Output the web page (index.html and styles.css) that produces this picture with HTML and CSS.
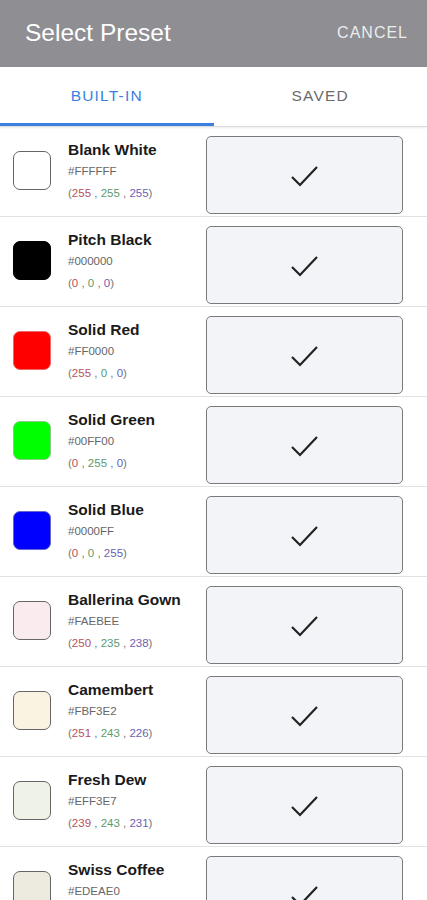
FILE: index.html
```html
<!DOCTYPE html>
<html lang="en">
<head>
    <meta charset="UTF-8">
    <meta name="viewport" content="width=device-width, initial-scale=1.0">
    <title>Select Preset</title>
    <link rel="stylesheet" href="styles.css">
</head>
<body>
    <div class="header">
        <div class="title">Select Preset</div>
        <div class="cancel">CANCEL</div>
    </div>

    <div class="tabs">
        <div class="tab active">BUILT-IN</div>
        <div class="tab">SAVED</div>
    </div>

    <div class="list">
        <div class="row">
            <div class="swatch" style="background:#FFFFFF"></div>
            <div class="info">
                <div class="name">Blank White</div>
                <div class="hex">#FFFFFF</div>
                <div class="rgb">(<span class="r">255</span> , <span class="g">255</span> , <span class="b">255</span>)</div>
            </div>
            <button class="pick"><svg viewBox="0 0 30 24" width="30" height="24"><path d="M2 13 L10 21 L27 3" fill="none" stroke="#222" stroke-width="2.2"/></svg></button>
        </div>
        <div class="row">
            <div class="swatch" style="background:#000000;border-color:#000"></div>
            <div class="info">
                <div class="name">Pitch Black</div>
                <div class="hex">#000000</div>
                <div class="rgb">(<span class="r">0</span> , <span class="g">0</span> , <span class="b">0</span>)</div>
            </div>
            <button class="pick"><svg viewBox="0 0 30 24" width="30" height="24"><path d="M2 13 L10 21 L27 3" fill="none" stroke="#222" stroke-width="2.2"/></svg></button>
        </div>
        <div class="row">
            <div class="swatch" style="background:#FF0000;border-color:#e66"></div>
            <div class="info">
                <div class="name">Solid Red</div>
                <div class="hex">#FF0000</div>
                <div class="rgb">(<span class="r">255</span> , <span class="g">0</span> , <span class="b">0</span>)</div>
            </div>
            <button class="pick"><svg viewBox="0 0 30 24" width="30" height="24"><path d="M2 13 L10 21 L27 3" fill="none" stroke="#222" stroke-width="2.2"/></svg></button>
        </div>
        <div class="row">
            <div class="swatch" style="background:#00FF00;border-color:#8c8"></div>
            <div class="info">
                <div class="name">Solid Green</div>
                <div class="hex">#00FF00</div>
                <div class="rgb">(<span class="r">0</span> , <span class="g">255</span> , <span class="b">0</span>)</div>
            </div>
            <button class="pick"><svg viewBox="0 0 30 24" width="30" height="24"><path d="M2 13 L10 21 L27 3" fill="none" stroke="#222" stroke-width="2.2"/></svg></button>
        </div>
        <div class="row">
            <div class="swatch" style="background:#0000FF;border-color:#66c"></div>
            <div class="info">
                <div class="name">Solid Blue</div>
                <div class="hex">#0000FF</div>
                <div class="rgb">(<span class="r">0</span> , <span class="g">0</span> , <span class="b">255</span>)</div>
            </div>
            <button class="pick"><svg viewBox="0 0 30 24" width="30" height="24"><path d="M2 13 L10 21 L27 3" fill="none" stroke="#222" stroke-width="2.2"/></svg></button>
        </div>
        <div class="row">
            <div class="swatch" style="background:#FAEBEE"></div>
            <div class="info">
                <div class="name">Ballerina Gown</div>
                <div class="hex">#FAEBEE</div>
                <div class="rgb">(<span class="r">250</span> , <span class="g">235</span> , <span class="b">238</span>)</div>
            </div>
            <button class="pick"><svg viewBox="0 0 30 24" width="30" height="24"><path d="M2 13 L10 21 L27 3" fill="none" stroke="#222" stroke-width="2.2"/></svg></button>
        </div>
        <div class="row">
            <div class="swatch" style="background:#FBF3E2"></div>
            <div class="info">
                <div class="name">Camembert</div>
                <div class="hex">#FBF3E2</div>
                <div class="rgb">(<span class="r">251</span> , <span class="g">243</span> , <span class="b">226</span>)</div>
            </div>
            <button class="pick"><svg viewBox="0 0 30 24" width="30" height="24"><path d="M2 13 L10 21 L27 3" fill="none" stroke="#222" stroke-width="2.2"/></svg></button>
        </div>
        <div class="row">
            <div class="swatch" style="background:#EFF3E7"></div>
            <div class="info">
                <div class="name">Fresh Dew</div>
                <div class="hex">#EFF3E7</div>
                <div class="rgb">(<span class="r">239</span> , <span class="g">243</span> , <span class="b">231</span>)</div>
            </div>
            <button class="pick"><svg viewBox="0 0 30 24" width="30" height="24"><path d="M2 13 L10 21 L27 3" fill="none" stroke="#222" stroke-width="2.2"/></svg></button>
        </div>
        <div class="row">
            <div class="swatch" style="background:#EDEAE0"></div>
            <div class="info">
                <div class="name">Swiss Coffee</div>
                <div class="hex">#EDEAE0</div>
                <div class="rgb">(<span class="r">237</span> , <span class="g">234</span> , <span class="b">224</span>)</div>
            </div>
            <button class="pick"><svg viewBox="0 0 30 24" width="30" height="24"><path d="M2 13 L10 21 L27 3" fill="none" stroke="#222" stroke-width="2.2"/></svg></button>
        </div>
    </div>
</body>
</html>
```

FILE: styles.css
```css
* {
    margin: 0;
    padding: 0;
    box-sizing: border-box;
}

body {
    font-family: 'Liberation Sans', Arial, sans-serif;
    background: #ffffff;
    width: 427px;
    height: 900px;
    overflow: hidden;
}

.header {
    height: 67px;
    background: #8e8e93;
    display: flex;
    align-items: center;
    justify-content: space-between;
    padding: 0 19px 0 25px;
}

.title {
    color: #ffffff;
    font-size: 24.5px;
    padding-bottom: 2px;
}

.cancel {
    color: #ececee;
    font-size: 16px;
    letter-spacing: 1px;
    padding-bottom: 2px;
}

.tabs {
    display: flex;
    height: 60px;
    border-bottom: 1px solid #dcdcdc;
    box-shadow: 0 1px 2px rgba(0, 0, 0, 0.08);
}

.tab {
    flex: 1;
    display: flex;
    align-items: center;
    justify-content: center;
    font-size: 15.5px;
    letter-spacing: 1.2px;
    color: #6a6a6a;
    border-bottom: 3px solid transparent;
    padding-top: 2px;
}

.tab.active {
    color: #3b7fe0;
    border-bottom-color: #3b7fe0;
}

.row {
    height: 90px;
    display: flex;
    align-items: flex-start;
    border-bottom: 1px solid #e2e2e2;
    padding: 9px 24px 0 13px;
}

.swatch {
    width: 38px;
    height: 39px;
    border: 1.5px solid #666;
    border-radius: 7px;
    margin-top: 15px;
    flex-shrink: 0;
}

.info {
    flex: 1;
    padding-left: 17px;
    padding-top: 5px;
}

.name {
    font-size: 15.5px;
    font-weight: bold;
    color: #1a1a1a;
    line-height: 18px;
}

.hex {
    font-size: 11.5px;
    color: #666;
    margin-top: 5px;
    line-height: 14px;
}

.rgb {
    font-size: 11.5px;
    color: #777;
    margin-top: 8px;
    line-height: 14px;
}

.rgb .r { color: #b8505c; }
.rgb .g { color: #5c9a6e; }
.rgb .b { color: #6a62b4; }

.pick {
    width: 197px;
    height: 78px;
    flex-shrink: 0;
    background: #f3f4f8;
    border: 1.5px solid #7a7a7a;
    border-radius: 5px;
    display: flex;
    align-items: center;
    justify-content: center;
}

.pick svg {
    margin-top: 2px;
}
```
